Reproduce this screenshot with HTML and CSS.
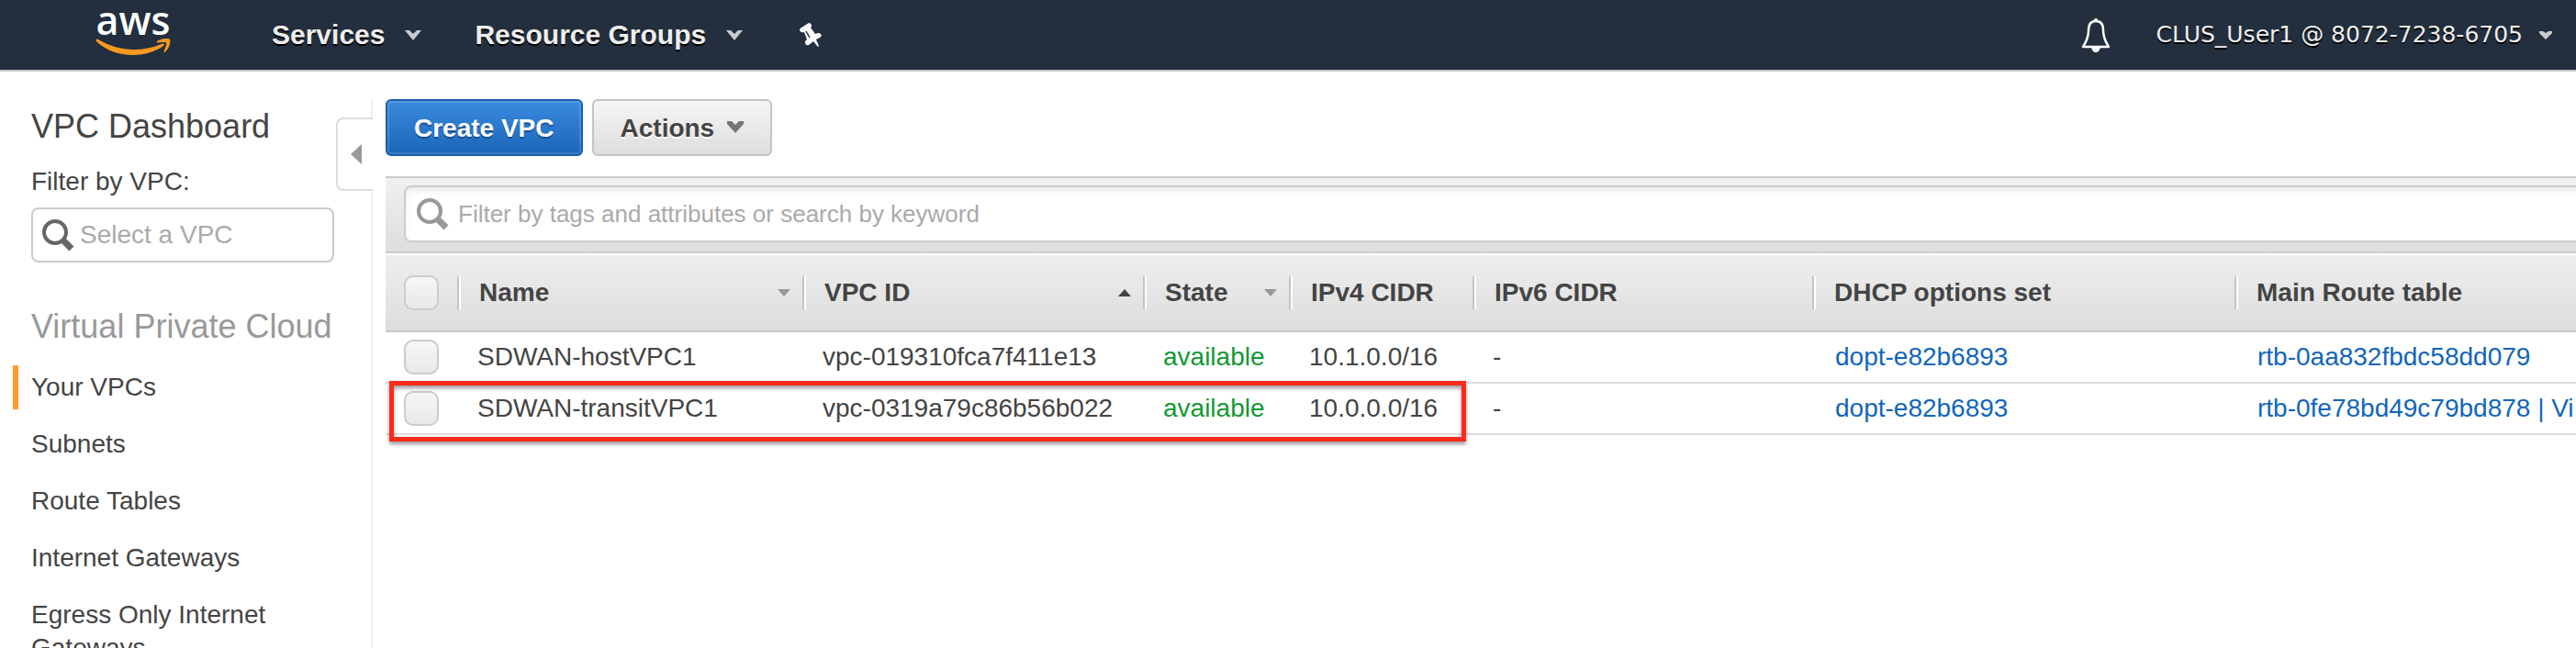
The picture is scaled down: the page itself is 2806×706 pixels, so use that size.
FILE: index.html
```html
<!DOCTYPE html>
<html lang="en">
<head>
<meta charset="utf-8">
<title>VPC Dashboard</title>
<link rel="stylesheet" href="styles.css">
</head>
<body>
<header class="topbar">
  <a class="logo" href="#" aria-label="AWS home">
    <span class="logo-word">aws</span>
    <svg class="logo-smile" viewBox="0 0 82 20" aria-hidden="true"><path d="M1 1C0 2 1 3 2 4C12 13 26 18 41 18C53 18 66 14 74 8C76 6 74 5 72 6C62 10 52 12 42 12C28 12 15 8 3 1Q2 0 1 1ZM67 3C66 4 67 4.500 68 4.500C71 4 76 3.500 77 4.500C78 6 76 10 74.500 14C74.500 15.500 75.500 15 76.500 14C81 10 82 3 81 1C79-1 71 0 67 3Z"/></svg>
  </a>
  <nav class="topnav">
    <button class="menu" type="button">Services <svg class="chev" viewBox="0 0 18 11"><path d="M0 0H5L9 4L13 0H18L9 11Z"/></svg></button>
    <button class="menu" type="button">Resource Groups <svg class="chev" viewBox="0 0 18 11"><path d="M0 0H5L9 4L13 0H18L9 11Z"/></svg></button>
    <button class="pin" type="button" aria-label="Edit shortcuts"><svg viewBox="0 0 24 27"><path d="M0 8Q0 6 2 5L10 0Q12 0 13 2V4L12 5L17 12Q21 10 23 12Q25 14 22 16L18 18L21 25L20 26L15 20L10 24Q7 25 6 22Q5 20 8 18L5 10Q1 11 0 8Z"/><path class="pin-line" d="M7 9L11 16"/></svg></button>
  </nav>
  <div class="account-area">
    <button class="bell" type="button" aria-label="Notifications"><svg viewBox="0 0 32 40"><path d="M16 5C9 5 8 10 8 15C8 24 5 28 2 33H30C27 28 24 24 24 15C24 10 23 5 16 5Z"/><path class="bell-fill" d="M14 5V3Q16 1 18 3V5ZM11 33H21Q20 39 16 39T11 33Z"/></svg></button>
    <button class="account" type="button">CLUS_User1 @ 8072-7238-6705 <svg class="chev-small" viewBox="0 0 14 9"><path d="M0 0H4L7 2L10 0H14V2L7 9L0 2Z"/></svg></button>
  </div>
</header>
<div class="layout">
  <aside class="sidebar">
    <h1 class="side-title">VPC Dashboard</h1>
    <label class="side-label" for="vpc">Filter by VPC:</label>
    <div class="side-search">
      <svg class="glass" viewBox="0 0 35 35"><circle cx="14" cy="14" r="12"/><path d="M22 22L32 32"/></svg>
      <input id="vpc" type="text" placeholder="Select a VPC">
    </div>
    <h2 class="side-group">Virtual Private Cloud</h2>
    <nav class="side-nav">
      <a class="active" href="#">Your VPCs</a>
      <a href="#">Subnets</a>
      <a href="#">Route Tables</a>
      <a href="#">Internet Gateways</a>
      <a href="#">Egress Only Internet Gateways</a>
    </nav>
    <button class="collapse" type="button" aria-label="Collapse sidebar"><svg viewBox="0 0 12 22"><path d="M12 0V22L0 11Z"/></svg></button>
  </aside>
  <main class="main">
    <div class="actions">
      <button class="btn primary" type="button">Create VPC</button>
      <button class="btn" type="button">Actions <svg class="chev-dark" viewBox="0 0 18 13"><path d="M0 0H5L9 4L13 0H18V3L9 13L0 3Z"/></svg></button>
    </div>
    <div class="filterbar">
      <div class="filter">
        <svg class="glass" viewBox="0 0 35 35"><circle cx="14" cy="14" r="12"/><path d="M22 22L32 32"/></svg>
        <input type="text" aria-label="Filter" placeholder="Filter by tags and attributes or search by keyword">
      </div>
    </div>
    <div class="table-wrap">
      <table>
        <colgroup><col class="c-check"><col class="c-name"><col class="c-id"><col class="c-state"><col class="c-v4"><col class="c-v6"><col class="c-dhcp"><col class="c-route"></colgroup>
        <thead>
          <tr>
            <th><input type="checkbox" aria-label="Select all"></th>
            <th><div class="head">Name <svg class="sort" viewBox="0 0 14 8"><path d="M0 0H14L7 8Z"/></svg></div></th>
            <th><div class="head">VPC ID <svg class="sort up" viewBox="0 0 14 8"><path d="M0 8H14L7 0Z"/></svg></div></th>
            <th><div class="head">State <svg class="sort" viewBox="0 0 14 8"><path d="M0 0H14L7 8Z"/></svg></div></th>
            <th><div class="head">IPv4 CIDR</div></th>
            <th><div class="head">IPv6 CIDR</div></th>
            <th><div class="head">DHCP options set</div></th>
            <th><div class="head">Main Route table</div></th>
          </tr>
        </thead>
        <tbody>
          <tr>
            <td><input type="checkbox" aria-label="Select SDWAN-hostVPC1"></td>
            <td>SDWAN-hostVPC1</td><td>vpc-019310fca7f411e13</td><td class="ok">available</td><td>10.1.0.0/16</td><td>-</td>
            <td class="link"><a href="#">dopt-e82b6893</a></td><td class="link"><a href="#">rtb-0aa832fbdc58dd079</a></td>
          </tr>
          <tr>
            <td><input type="checkbox" aria-label="Select SDWAN-transitVPC1"></td>
            <td>SDWAN-transitVPC1</td><td>vpc-0319a79c86b56b022</td><td class="ok">available</td><td>10.0.0.0/16</td><td>-</td>
            <td class="link"><a href="#">dopt-e82b6893</a></td><td class="link"><a href="#">rtb-0fe78bd49c79bd878 | Vi</a></td>
          </tr>
        </tbody>
      </table>
      <div class="callout"></div>
    </div>
  </main>
</div>
</body>
</html>
```

FILE: styles.css
```css
* { box-sizing: border-box; }
body {
  margin: 0;
  height: 100vh;
  overflow: hidden;
  display: flex;
  flex-direction: column;
  background: #fff;
  color: #444;
  font: 28px/36px "Liberation Sans", Arial, sans-serif;
}
button, input { font: inherit; color: inherit; margin: 0; }
button { cursor: pointer; }
a { color: #1166bb; text-decoration: none; }
svg { display: block; flex: none; }

.topbar {
  display: flex;
  align-items: center;
  flex: none;
  height: 78px;
  padding: 0 26px 0 104px;
  background: #232f3e;
  border-bottom: 2px solid #c8c9cc;
}
.topbar button {
  display: flex;
  align-items: center;
  padding: 0;
  border: 0;
  background: none;
  color: #eee;
  text-shadow: 0 2px 0 #000;
}
.logo { width: 82px; padding-bottom: 10px; display: flex; flex-direction: column; align-items: center; }
.logo-word { color: #fff; font: 600 43px/36px "Open Sans", sans-serif; height: 38px; }
.logo-smile { width: 82px; height: 20px; fill: #f7981f; }
.topnav { display: flex; align-items: center; gap: 58px; margin-left: 110px; }
.topbar .menu { gap: 22px; font-weight: 700; font-size: 30px; }
.chev { width: 18px; height: 11px; fill: #ccc; }
.topbar .pin { margin-left: 4px; }
.pin svg { width: 24px; height: 27px; fill: #fff; }
.pin-line { stroke: #232f3e; stroke-width: 1.5; }
.account-area { display: flex; align-items: center; gap: 50px; margin-left: auto; }
.bell svg { width: 32px; height: 40px; fill: none; stroke: #fff; stroke-width: 2.5; stroke-linejoin: round; }
.bell svg .bell-fill { fill: #fff; stroke: none; }
.topbar .account { gap: 18px; font: 25px/36px "DejaVu Sans", Verdana, sans-serif; }
.chev-small { width: 14px; height: 9px; fill: #ccc; }

.layout { display: flex; flex: 1; min-height: 0; padding-top: 30px; }
.sidebar {
  position: relative;
  flex: none;
  width: 406px;
  padding: 8px 40px 0 34px;
  border-right: 2px solid #eee;
}
.side-title, .side-group { margin: 0; font-weight: 400; font-size: 36px; line-height: 44px; }
.side-label { display: block; margin-top: 20px; }
.side-search {
  display: flex;
  align-items: center;
  gap: 6px;
  height: 60px;
  margin-top: 10px;
  padding: 0 10px;
  border: 2px solid #ccc;
  border-radius: 8px;
}
input[type="text"] { flex: 1; min-width: 0; border: 0; padding: 0; background: none; outline: 0; }
input::placeholder { color: #aaa; opacity: 1; }
.glass { width: 35px; height: 35px; fill: none; stroke: #666; stroke-width: 4; }
.glass path { stroke-width: 7; }
.side-group { margin-top: 48px; margin-right: -20px; color: #999; white-space: nowrap; }
.side-nav { display: flex; flex-direction: column; gap: 14px; margin: 20px 0 0 -20px; }
.side-nav a { padding: 6px 0 6px 14px; border-left: 6px solid transparent; color: #444; }
.side-nav .active { border-color: #ff9c2f; }
.collapse {
  position: absolute;
  top: 20px;
  right: -2px;
  width: 40px;
  height: 80px;
  padding: 0 0 0 14px;
  border: 2px solid #ddd;
  border-right: 0;
  border-radius: 8px 0 0 8px;
  background: #fff;
}
.collapse svg { width: 12px; height: 22px; fill: #999; }

.main { flex: 1; min-width: 0; padding-left: 14px; }
.actions { display: flex; gap: 10px; }
.btn {
  display: flex;
  align-items: center;
  gap: 14px;
  height: 62px;
  padding: 2px 29px 0;
  border: 2px solid #c4c4c4;
  border-radius: 6px;
  background: linear-gradient(#f6f6f6, #ddd);
  font-weight: 700;
  text-shadow: 0 2px 0 #fff;
}
.primary {
  border-color: #1a5fae;
  background: linear-gradient(#3a8ade, #1a66b8);
  box-shadow: inset 0 0 0 2px #ffffff22;
  color: #fff;
  text-shadow: 0 2px 0 #1a4f94;
}
.chev-dark { width: 18px; height: 13px; margin-bottom: 4px; fill: #777; }
.filterbar {
  margin-top: 22px;
  padding: 8px 0 10px 20px;
  border: solid #ccc;
  border-width: 2px 0;
  background: linear-gradient(#f0f0f0, #ddd);
}
.filter {
  display: flex;
  align-items: center;
  gap: 10px;
  height: 62px;
  margin-right: -20px;
  padding-left: 12px;
  border: 2px solid #ccc;
  border-radius: 8px;
  background: #fff;
  box-shadow: inset 0 4px 8px -2px #0000001f;
}
.filter .glass { stroke: #999; }
.filter input { font-size: 26px; }

.table-wrap { position: relative; }
table { width: 100%; table-layout: fixed; border-collapse: separate; border-spacing: 0; }
.c-check { width: 78px; }
.c-name { width: 376px; }
.c-id { width: 371px; }
.c-state { width: 159px; }
.c-v4 { width: 200px; }
.c-v6 { width: 370px; }
.c-dhcp { width: 460px; }
th {
  height: 86px;
  padding: 0;
  border-top: 2px solid #fff;
  border-bottom: 2px solid #c8c8c8;
  background: linear-gradient(#eee, #ddd) padding-box;
  text-align: left;
}
.head {
  display: flex;
  align-items: center;
  justify-content: space-between;
  height: 36px;
  padding: 0 13px 0 22px;
  border-left: 2px solid #c4c4c4;
  box-shadow: inset 2px 0 0 #fff;
}
.sort { width: 14px; height: 8px; fill: #999; }
.sort.up { fill: #444; }
td { height: 56px; padding: 0 0 0 22px; border-bottom: 2px solid #ddd; white-space: nowrap; }
td.link { padding-left: 25px; }
th:first-child, td:first-child { padding-left: 20px; }
.ok { color: #119933; }
input[type="checkbox"] {
  appearance: none;
  display: block;
  width: 38px;
  height: 38px;
  border: 2px solid #ccc;
  border-radius: 10px;
  background: linear-gradient(#f6f6f6, #e8e8e8);
}
.callout {
  position: absolute;
  left: 4px;
  top: 139px;
  width: 1173px;
  height: 66px;
  border: 5px solid #ff2b1c;
  box-shadow: 0 3px 4px #00000066, inset 0 3px 4px #00000066;
  pointer-events: none;
}
```
